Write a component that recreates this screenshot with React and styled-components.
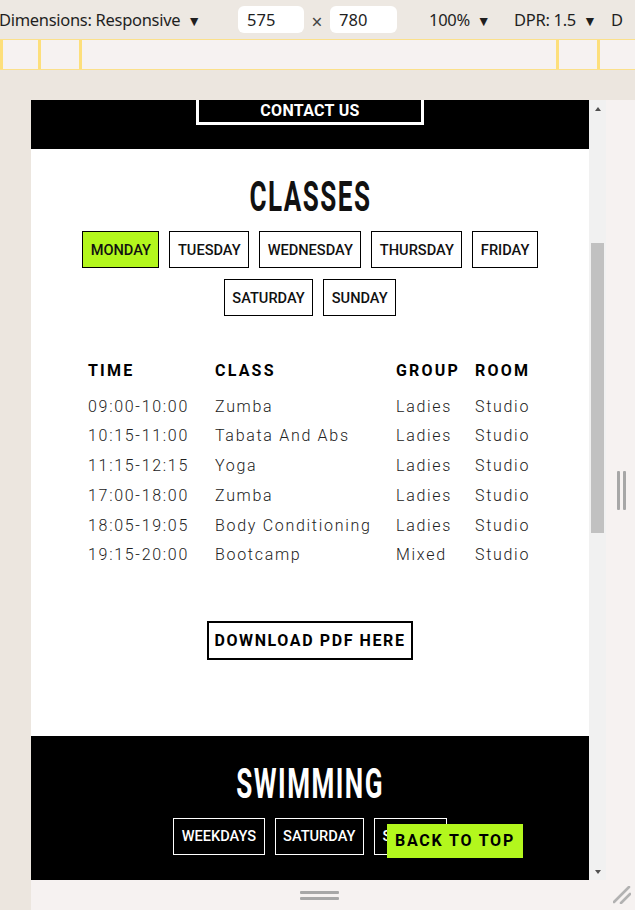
import styled, { createGlobalStyle } from "styled-components";

const GlobalStyle = createGlobalStyle`
  html, body {
    margin: 0;
    padding: 0;
  }
  body {
    width: 635px;
    height: 910px;
    overflow: hidden;
    background: #ece6df;
    font-family: "Roboto", "Liberation Sans", sans-serif;
  }
`;

const GREEN = "#b3f71d";

const Shell = styled.div`
  display: flex;
  flex-direction: column;
  width: 635px;
  height: 910px;
  overflow: hidden;
  background: #ece6df;
`;

/* ---------- devtools bar ---------- */

const Toolbar = styled.div`
  display: flex;
  align-items: center;
  height: 39px;
  flex-shrink: 0;
  background: #ede8e2;
  color: #1f1f1f;
  font-family: "Noto Sans", "Liberation Sans", sans-serif;
  font-size: 16.5px;
  white-space: nowrap;
`;

const ToolItem = styled.div`
  width: ${({ w }) => w}px;
  flex-shrink: 0;
  margin-left: ${({ ml }) => ml || 0}px;
  letter-spacing: -0.3px;
`;

const Caret = styled.span`
  font-size: 14px;
  margin-left: 7px;
`;

const SizeInput = styled.div`
  width: ${({ w }) => w}px;
  height: 27px;
  flex-shrink: 0;
  box-sizing: border-box;
  padding-left: 9px;
  border-radius: 6px;
  background: #fff;
  line-height: 27px;
`;

const Times = styled.div`
  width: 26px;
  flex-shrink: 0;
  text-align: center;
  font-size: 19px;
  color: #444;
  padding-top: 4px;
`;

const Ruler = styled.div`
  display: flex;
  height: 29px;
  flex-shrink: 0;
  background: #f6f2f1;
  border-top: 1px solid #fbe08a;
  border-bottom: 1px solid #fbe08a;
`;

const RulerGap = styled.div`
  width: ${({ w }) => w}px;
  flex-shrink: 0;
`;

const RulerMark = styled.div`
  width: 3px;
  flex-shrink: 0;
  background: #fddf7b;
`;

const Gutter = styled.div`
  height: 30px;
  flex-shrink: 0;
`;

const Stage = styled.div`
  display: flex;
  flex: 1;
`;

const LeftGutter = styled.div`
  width: 31px;
  flex-shrink: 0;
`;

const Frame = styled.div`
  display: grid;
  grid-template-columns: 575px 29px;
  grid-template-rows: 780px 30px;
  background: #f6f2f1;
`;

const Viewport = styled.div`
  display: flex;
  width: 575px;
  height: 780px;
  overflow: hidden;
`;

const SideHandle = styled.div`
  display: flex;
  align-items: center;
  justify-content: center;
  gap: 3px;
  padding-left: 2px;
`;

const VBar = styled.div`
  width: 3px;
  height: 39px;
  border-radius: 1px;
  background: #a7a7a7;
`;

const BottomHandle = styled.div`
  display: flex;
  flex-direction: column;
  align-items: center;
  justify-content: center;
  gap: 3px;
  padding-left: 2px;
`;

const HBar = styled.div`
  width: 39px;
  height: 3px;
  border-radius: 1px;
  background: #a7a7a7;
`;

const Corner = styled.div`
  display: flex;
  padding: 6px 0 0 7px;
`;

/* ---------- scrollbar ---------- */

const Scrollbar = styled.div`
  display: flex;
  flex-direction: column;
  width: 17px;
  flex-shrink: 0;
  background: #f1f1f1;
`;

const ScrollArrow = styled.div`
  height: 17px;
  display: flex;
  align-items: center;
  justify-content: center;
  &::before {
    content: "";
    border-left: 3.5px solid transparent;
    border-right: 3.5px solid transparent;
    ${({ down }) =>
      down
        ? "border-top: 4px solid #505050;"
        : "border-bottom: 4px solid #505050;"}
  }
`;

const ScrollTrack = styled.div`
  flex: 1;
  padding: 0 2px;
`;

const Thumb = styled.div`
  margin-top: 126px;
  height: 290px;
  background: #c1c1c1;
`;

/* ---------- page ---------- */

const Screen = styled.div`
  position: relative;
  width: 558px;
  height: 780px;
  overflow: hidden;
  background: #fff;
`;

const Page = styled.div`
  margin-top: -40px;
`;

const Header = styled.header`
  background: #000;
  padding: 21px 0 24px;
  text-align: center;
`;

const ContactButton = styled.a`
  display: inline-block;
  box-sizing: border-box;
  width: 228px;
  padding: 17px 0 1px;
  border: 3px solid #fff;
  color: #fff;
  font-size: 16px;
  font-weight: 700;
  line-height: 20px;
  letter-spacing: 0.3px;
  text-transform: uppercase;
  text-decoration: none;
`;

const Section = styled.section`
  background: ${({ dark }) => (dark ? "#000" : "#fff")};
  color: ${({ dark }) => (dark ? "#fff" : "#111")};
  padding: 27px 0 ${({ dark }) => (dark ? 120 : 76)}px;
  display: flex;
  flex-direction: column;
  align-items: center;
`;

const Heading = styled.h2`
  margin: 0;
  font-size: 42px;
  line-height: 42px;
  font-weight: 700;
  letter-spacing: 2.4px;
  text-transform: uppercase;
  transform: scaleX(0.62);
`;

const Tabs = styled.div`
  display: flex;
  flex-wrap: wrap;
  justify-content: center;
  gap: 11px 10px;
  max-width: 480px;
  margin-top: 13px;
`;

const Tab = styled.button`
  height: 37px;
  box-sizing: border-box;
  padding: 0 7.5px;
  border: 1px solid ${({ dark }) => (dark ? "#fff" : "#000")};
  background: ${({ active, dark }) =>
    active ? GREEN : dark ? "transparent" : "#fff"};
  color: ${({ dark }) => (dark ? "#fff" : "#111")};
  font-family: "Roboto", "Liberation Sans", sans-serif;
  font-size: 14.6px;
  font-weight: 500;
  text-transform: uppercase;
  cursor: pointer;
`;

const Timetable = styled.div`
  display: grid;
  grid-template-columns: 127px 181px 79px 57px;
  margin-top: 40px;
  font-size: 16px;
  letter-spacing: 1.7px;
  color: #222;
`;

const HeadCell = styled.div`
  font-weight: 700;
  letter-spacing: 2.2px;
  line-height: 29.7px;
  padding-bottom: 6px;
  color: #000;
  text-transform: uppercase;
`;

const Cell = styled.div`
  font-weight: 300;
  line-height: 29.7px;
  white-space: nowrap;
`;

const DownloadButton = styled.a`
  display: block;
  box-sizing: border-box;
  width: 206px;
  height: 39px;
  margin-top: 51px;
  border: 2px solid #000;
  color: #000;
  font-size: 16px;
  font-weight: 700;
  line-height: 35px;
  letter-spacing: 1.6px;
  text-align: center;
  text-transform: uppercase;
  text-decoration: none;
`;

const BackToTop = styled.a`
  position: absolute;
  right: 66px;
  bottom: 22px;
  width: 136px;
  height: 34px;
  background: ${GREEN};
  color: #000;
  font-size: 16px;
  font-weight: 700;
  line-height: 34px;
  letter-spacing: 1.8px;
  text-align: center;
  text-transform: uppercase;
  text-decoration: none;
`;

const days = ["Monday", "Tuesday", "Wednesday", "Thursday", "Friday", "Saturday", "Sunday"];

const schedule = [
  ["09:00-10:00", "Zumba", "Ladies", "Studio"],
  ["10:15-11:00", "Tabata And Abs", "Ladies", "Studio"],
  ["11:15-12:15", "Yoga", "Ladies", "Studio"],
  ["17:00-18:00", "Zumba", "Ladies", "Studio"],
  ["18:05-19:05", "Body Conditioning", "Ladies", "Studio"],
  ["19:15-20:00", "Bootcamp", "Mixed", "Studio"],
];

function ResizeCorner() {
  return (
    <svg width="18" height="18" viewBox="0 0 18 18">
      <path d="M1 16 L16 1 M8 17 L17 8" stroke="#b2b2b2" strokeWidth="2.6" strokeLinecap="round" />
    </svg>
  );
}

export default function App() {
  return (
    <Shell>
      <GlobalStyle />
      <Toolbar>
        <ToolItem w={239} ml={-1}>
          Dimensions: Responsive<Caret>▼</Caret>
        </ToolItem>
        <SizeInput w={66}>575</SizeInput>
        <Times>×</Times>
        <SizeInput w={67}>780</SizeInput>
        <ToolItem w={85} ml={32}>
          100%<Caret>▼</Caret>
        </ToolItem>
        <ToolItem w={97}>
          DPR: 1.5<Caret>▼</Caret>
        </ToolItem>
        <ToolItem w={40}>D</ToolItem>
      </Toolbar>

      <Ruler>
        <RulerMark />
        <RulerGap w={35} />
        <RulerMark />
        <RulerGap w={38} />
        <RulerMark />
        <RulerGap w={474} />
        <RulerMark />
        <RulerGap w={38} />
        <RulerMark />
      </Ruler>

      <Gutter />

      <Stage>
        <LeftGutter />
        <Frame>
          <Viewport>
            <Screen>
              <Page>
                <Header>
                  <ContactButton href="#">Contact Us</ContactButton>
                </Header>

                <Section>
                  <Heading>Classes</Heading>
                  <Tabs>
                    {days.map((d, i) => (
                      <Tab key={d} active={i === 0}>
                        {d}
                      </Tab>
                    ))}
                  </Tabs>

                  <Timetable>
                    <HeadCell>Time</HeadCell>
                    <HeadCell>Class</HeadCell>
                    <HeadCell>Group</HeadCell>
                    <HeadCell>Room</HeadCell>
                    {schedule.map((row) =>
                      row.map((c, j) => <Cell key={row[0] + j}>{c}</Cell>)
                    )}
                  </Timetable>

                  <DownloadButton href="#">Download PDF Here</DownloadButton>
                </Section>

                <Section dark>
                  <Heading>Swimming</Heading>
                  <Tabs>
                    {["Weekdays", "Saturday", "Sunday"].map((d) => (
                      <Tab key={d} dark>
                        {d}
                      </Tab>
                    ))}
                  </Tabs>
                </Section>
              </Page>
              <BackToTop href="#">Back to top</BackToTop>
            </Screen>

            <Scrollbar>
              <ScrollArrow />
              <ScrollTrack>
                <Thumb />
              </ScrollTrack>
              <ScrollArrow down />
            </Scrollbar>
          </Viewport>

          <SideHandle>
            <VBar />
            <VBar />
          </SideHandle>

          <BottomHandle>
            <HBar />
            <HBar />
          </BottomHandle>

          <Corner>
            <ResizeCorner />
          </Corner>
        </Frame>
      </Stage>
    </Shell>
  );
}
